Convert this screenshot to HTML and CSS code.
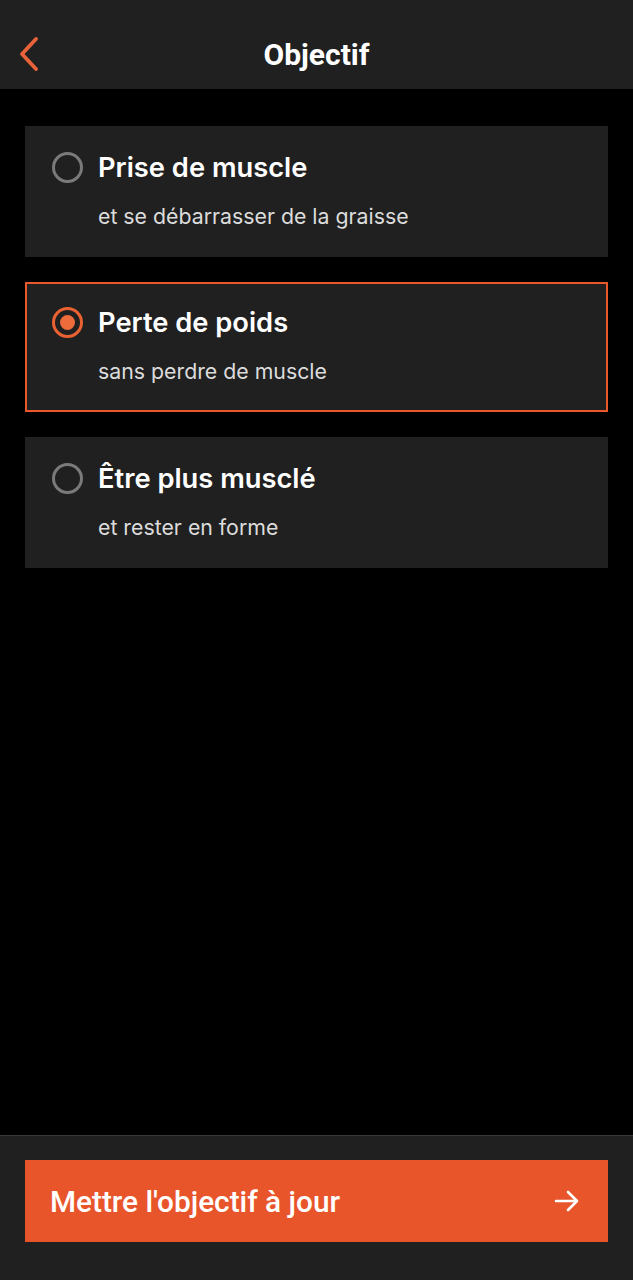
FILE: index.html
```html
<!DOCTYPE html>
<html lang="fr">
<head>
  <meta charset="UTF-8">
  <title>Objectif</title>
  <link rel="stylesheet" href="styles.css">
</head>
<body>
  <div class="page">

    <!-- En-tête -->
    <div class="entete">
      <button class="retour" aria-label="Retour">
        <svg width="24" height="36" viewBox="0 0 24 36">
          <path d="M19 3 L5 18 L19 33" fill="none" stroke="#e8623a" stroke-width="3.8" stroke-linecap="round" stroke-linejoin="round"/>
        </svg>
      </button>
      <h1>Objectif</h1>
    </div>

    <!-- Liste des objectifs -->
    <div class="liste">
      <div class="option">
        <span class="radio"></span>
        <div class="texte">
          <div class="titre">Prise de muscle</div>
          <div class="sous-titre">et se débarrasser de la graisse</div>
        </div>
      </div>

      <div class="option choisie">
        <span class="radio"></span>
        <div class="texte">
          <div class="titre">Perte de poids</div>
          <div class="sous-titre">sans perdre de muscle</div>
        </div>
      </div>

      <div class="option">
        <span class="radio"></span>
        <div class="texte">
          <div class="titre">Être plus musclé</div>
          <div class="sous-titre">et rester en forme</div>
        </div>
      </div>
    </div>

    <!-- Bouton du bas -->
    <div class="pied">
      <button class="valider">
        <span>Mettre l'objectif à jour</span>
        <svg width="26" height="24" viewBox="0 0 26 24">
          <path d="M2 12 H23 M14 3 L23 12 L14 21" fill="none" stroke="#fff" stroke-width="2.6" stroke-linecap="round" stroke-linejoin="round"/>
        </svg>
      </button>
    </div>

  </div>
</body>
</html>
```

FILE: styles.css
```css
* {
  box-sizing: border-box;
}
body {
  margin: 0;
  background-color: #000;
  font-family: Inter, "Noto Sans", sans-serif;
  color: #fff;
}
.page {
  height: 1280px;
  display: flex;
  flex-direction: column;
}

/* En-tête */
.entete {
  height: 89px;
  padding-top: 20px;
  background-color: #202020;
  display: flex;
  align-items: center;
  justify-content: center;
  position: relative;
}
.entete h1 {
  margin: 0;
  font-size: 30px;
  font-weight: 700;
  font-family: Roboto, sans-serif;
}
.retour {
  position: absolute;
  left: 17px;
  top: 36px;
  padding: 0;
  border: none;
  background: none;
  cursor: pointer;
}

/* Options */
.liste {
  flex: 1;
  padding: 37px 25px 0;
  display: flex;
  flex-direction: column;
  gap: 25px;
}
.option {
  height: 131px;
  background-color: #202020;
  border: 2px solid transparent;
  padding: 24px 25px 0;
  display: flex;
  gap: 15px;
}
.option.choisie {
  height: 130px;
  border-color: #e8582a;
  padding-top: 23px;
}
.radio {
  width: 31px;
  height: 31px;
  border: 3px solid #7a7a7a;
  border-radius: 50%;
  flex-shrink: 0;
  display: flex;
  align-items: center;
  justify-content: center;
}
.choisie .radio {
  border-color: #ea6132;
}
.choisie .radio::after {
  content: "";
  width: 15px;
  height: 15px;
  border-radius: 50%;
  background-color: #ee6b3b;
}
.titre {
  font-size: 27.3px;
  font-weight: 600;
  line-height: 32px;
  margin-top: 0;
}
.sous-titre {
  margin-top: 18px;
  font-size: 21.3px;
  line-height: 28px;
  color: #dcdcdc;
}

/* Pied */
.pied {
  background-color: #202020;
  border-top: 1px solid #3a3a3a;
  padding: 24px 25px 38px;
}
.valider {
  width: 100%;
  height: 82px;
  border: none;
  background-color: #e9552b;
  color: #fff;
  font-family: Roboto, sans-serif;
  font-size: 29.8px;
  font-weight: 500;
  padding: 0 28px 0 25px;
  display: flex;
  align-items: center;
  justify-content: space-between;
  cursor: pointer;
}
```
